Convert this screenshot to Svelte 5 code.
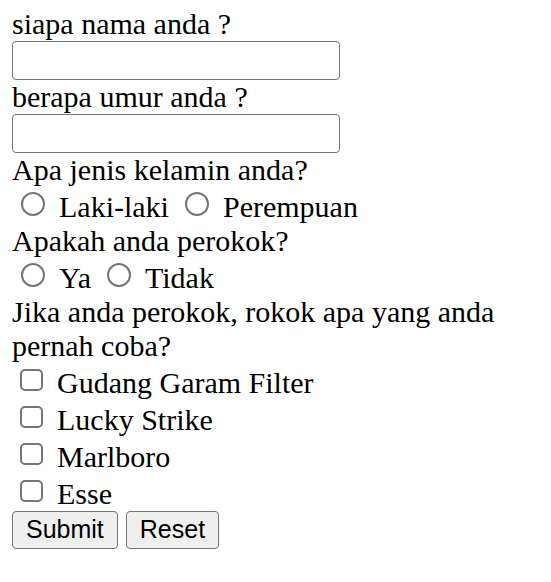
<script>
  const brands = ['Gudang Garam Filter', 'Lucky Strike', 'Marlboro', 'Esse'];
</script>

<form onsubmit={(event) => event.preventDefault()}>
  <label class="question" for="nama">siapa nama anda ?</label>
  <input class="text" type="text" id="nama" name="nama" />

  <label class="question" for="umur">berapa umur anda ?</label>
  <input class="text" type="text" id="umur" name="umur" />

  <div class="question" id="kelamin">Apa jenis kelamin anda?</div>
  <div class="options radios" role="radiogroup" aria-labelledby="kelamin">
    <label class="choice"><input type="radio" name="kelamin" value="laki-laki" />Laki-laki</label>
    <label class="choice"><input type="radio" name="kelamin" value="perempuan" />Perempuan</label>
  </div>

  <div class="question" id="perokok">Apakah anda perokok?</div>
  <div class="options radios" role="radiogroup" aria-labelledby="perokok">
    <label class="choice"><input type="radio" name="perokok" value="ya" />Ya</label>
    <label class="choice"><input type="radio" name="perokok" value="tidak" />Tidak</label>
  </div>

  <div class="question" id="rokok">Jika anda perokok, rokok apa yang anda pernah coba?</div>
  <div role="group" aria-labelledby="rokok">
    {#each brands as brand}
      <div class="options">
        <label class="choice"><input type="checkbox" name="rokok" value={brand} />{brand}</label>
      </div>
    {/each}
  </div>

  <div class="actions">
    <button type="submit">Submit</button>
    <button type="reset">Reset</button>
  </div>
</form>

<style>
  :global(body) {
    margin: 0;
    background: #fff;
  }

  form {
    padding: 7px 12px 12px;
    font-family: 'Liberation Serif', 'Times New Roman', serif;
    font-size: 30px;
    line-height: 34px;
    color: #000;
  }

  .question {
    display: block;
  }

  .text {
    display: block;
    box-sizing: border-box;
    width: 328px;
    max-width: 100%;
    height: 39px;
    padding: 2px 4px;
    border: 1px solid #767676;
    border-radius: 4px;
    background: #fff;
    font: 25px 'Liberation Sans', Arial, sans-serif;
  }

  .options {
    display: flex;
    flex-wrap: wrap;
    gap: 0 16px;
    padding: 3px 0 0 8px;
  }

  .radios {
    padding-left: 9px;
  }

  .choice {
    display: flex;
    align-items: flex-start;
    gap: 14px;
  }

  input[type='radio'],
  input[type='checkbox'] {
    appearance: none;
    box-sizing: border-box;
    flex: none;
    border: 2px solid #767676;
    background: #fff;
  }

  input[type='radio'] {
    width: 24px;
    height: 24px;
    margin: 2px 0 0;
    border-radius: 50%;
  }

  input[type='checkbox'] {
    width: 23px;
    height: 22px;
    margin: 3px 0 0;
    border-radius: 5px;
  }

  input[type='radio']:checked {
    border-color: #0075ff;
    background: #0075ff;
    box-shadow: inset 0 0 0 3px #fff;
  }

  input[type='checkbox']:checked {
    border-color: #0075ff;
    background: #0075ff;
  }

  .actions {
    display: flex;
    gap: 8px;
  }

  button {
    box-sizing: border-box;
    height: 38px;
    padding: 0 13px 2px;
    border: 1px solid #767676;
    border-radius: 4px;
    background: #efefef;
    color: #000;
    font: 25px 'Liberation Sans', Arial, sans-serif;
  }
</style>
